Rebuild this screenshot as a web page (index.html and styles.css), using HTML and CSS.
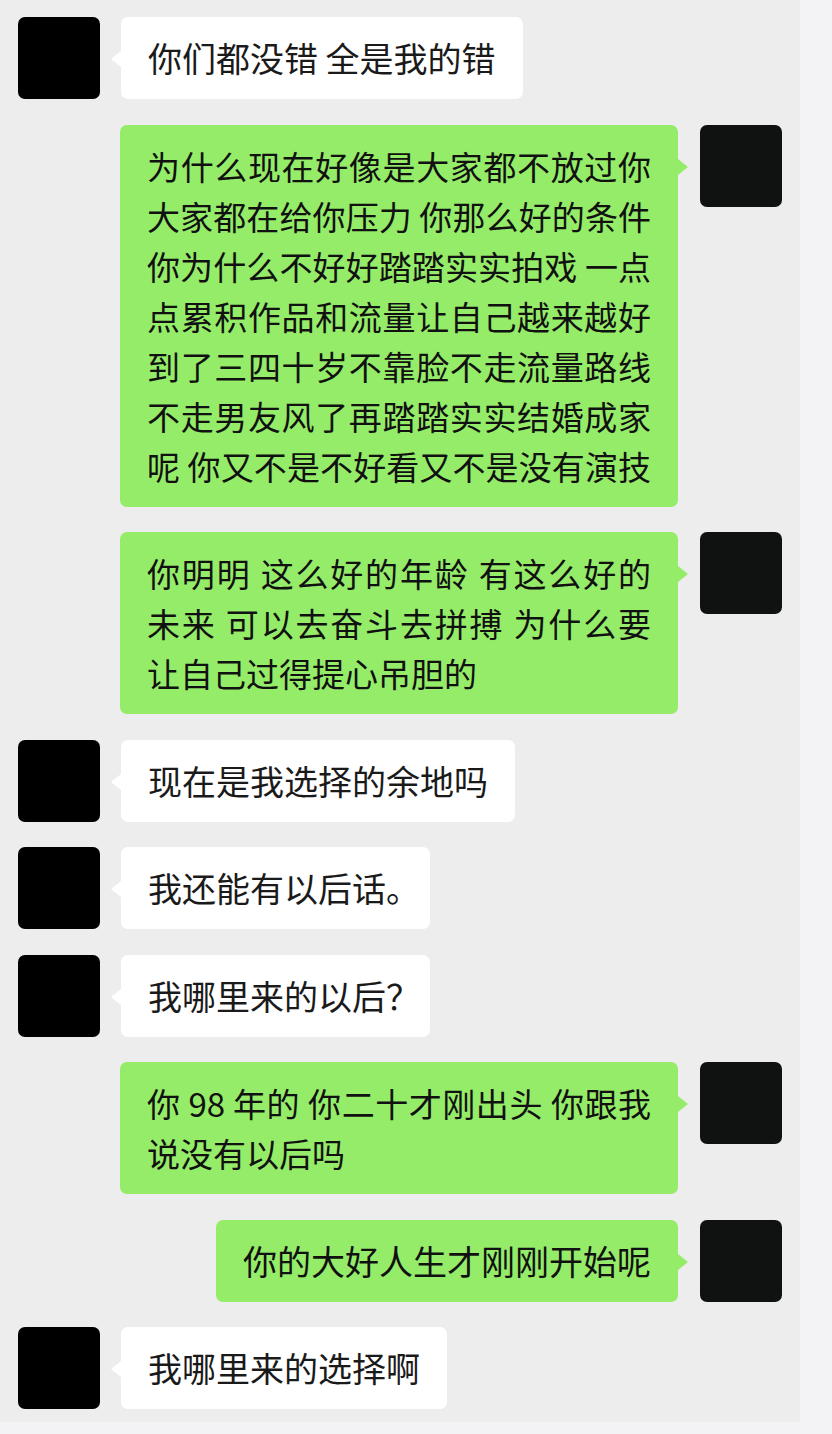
FILE: index.html
```html
<!DOCTYPE html>
<html lang="zh-CN">
<head>
  <meta charset="UTF-8">
  <meta name="viewport" content="width=device-width, initial-scale=1.0">
  <title>聊天记录</title>
  <link rel="stylesheet" href="styles.css">
</head>
<body>

<div class="chat">

  <!-- 对方 -->
  <div class="msg left">
    <div class="avatar"></div>
    <div class="bubble">你们都没错 全是我的错</div>
  </div>

  <!-- 我：长消息按原样分行 -->
  <div class="msg right">
    <div class="bubble wide">
      <span class="line">为什么现在好像是大家都不放过你</span>
      <span class="line">大家都在给你压力 你那么好的条件</span>
      <span class="line">你为什么不好好踏踏实实拍戏 一点</span>
      <span class="line">点累积作品和流量让自己越来越好</span>
      <span class="line">到了三四十岁不靠脸不走流量路线</span>
      <span class="line">不走男友风了再踏踏实实结婚成家</span>
      <span class="line">呢 你又不是不好看又不是没有演技</span>
    </div>
    <div class="avatar"></div>
  </div>

  <div class="msg right">
    <div class="bubble wide">
      <span class="line">你明明 这么好的年龄 有这么好的</span>
      <span class="line">未来 可以去奋斗去拼搏 为什么要</span>
      <span class="line last">让自己过得提心吊胆的</span>
    </div>
    <div class="avatar"></div>
  </div>

  <div class="msg left">
    <div class="avatar"></div>
    <div class="bubble">现在是我选择的余地吗</div>
  </div>

  <div class="msg left">
    <div class="avatar"></div>
    <div class="bubble">我还能有以后话。</div>
  </div>

  <div class="msg left">
    <div class="avatar"></div>
    <div class="bubble">我哪里来的以后？</div>
  </div>

  <div class="msg right">
    <div class="bubble wide">
      <span class="line">你 98 年的 你二十才刚出头 你跟我</span>
      <span class="line last">说没有以后吗</span>
    </div>
    <div class="avatar"></div>
  </div>

  <div class="msg right">
    <div class="bubble">你的大好人生才刚刚开始呢</div>
    <div class="avatar"></div>
  </div>

  <div class="msg left">
    <div class="avatar"></div>
    <div class="bubble">我哪里来的选择啊</div>
  </div>

</div>

</body>
</html>
```

FILE: styles.css
```css
body {
  margin: 0;
  background: #f3f3f5;
  font-family: "Noto Sans CJK SC", "Noto Sans", sans-serif;
}

/* 聊天区域 */
.chat {
  width: 800px;
  height: 1422px;
  box-sizing: border-box;
  background: #ededed;
  padding-top: 17px;
  display: flex;
  flex-direction: column;
  gap: 25.5px;
}

.msg { display: flex; align-items: flex-start; }
.msg.left { padding-left: 18px; gap: 21px; }
.msg.right { justify-content: flex-end; padding-right: 18px; gap: 22px; }

/* 头像 */
.avatar {
  width: 82px;
  height: 82px;
  flex: none;
  border-radius: 7px;
  background: #000;
}
.right .avatar { background: #0f1210; }

/* 气泡 */
.bubble {
  position: relative;
  padding: 16px 27px;
  border-radius: 7px;
  font-size: 34px;
  line-height: 50px;
  font-feature-settings: "halt";
  white-space: nowrap;
  color: #1a1a1a;
  background: #fff;
}
.right .bubble { background: #95ec69; color: #111; }

/* 多行气泡：固定宽度，每行两端对齐 */
.bubble.wide { width: 504px; font-size: 33px; }
.line { display: block; text-align: justify; text-align-last: justify; }
.line.last { text-align-last: left; }

/* 小三角 */
.bubble::before {
  content: "";
  position: absolute;
  top: 34px;
  border-style: solid;
  border-color: transparent;
}
.left .bubble::before {
  left: -10px;
  border-width: 8px 10px 8px 0;
  border-right-color: #fff;
}
.right .bubble::before {
  right: -10px;
  border-width: 8px 0 8px 10px;
  border-left-color: #95ec69;
}
```
